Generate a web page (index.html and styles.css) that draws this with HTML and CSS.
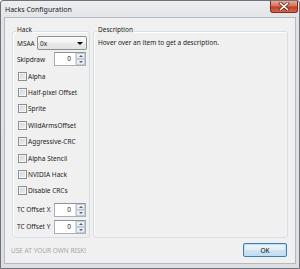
FILE: index.html
```html
<!DOCTYPE html>
<html lang="en">

<head>
  <meta charset="UTF-8" />
  <title>Hacks Configuration</title>
  <link rel="stylesheet" href="styles.css">
</head>

<body>
  <div class="window">
    <div class="titlebar">
      <span class="title">Hacks Configuration</span>
      <div class="close">
        <svg width="12" height="9" viewBox="0 0 12 9">
          <path d="M2.5 1.5 L9.5 7.5 M9.5 1.5 L2.5 7.5" stroke="#6b2a1e" stroke-width="3" stroke-linecap="square" />
          <path d="M2.5 1.5 L9.5 7.5 M9.5 1.5 L2.5 7.5" stroke="#fff" stroke-width="1.6" stroke-linecap="square" />
        </svg>
      </div>
    </div>

    <div class="client">
      <div class="groups">
        <div class="group hack">
          <span class="group-title">Hack</span>

          <div class="row">
            <span class="label">MSAA</span>
            <div class="select">0x<span class="arrow"></span></div>
          </div>
          <div class="row">
            <span class="label long">Skipdraw</span>
            <div class="spin">
              <span class="value">0</span>
              <span class="spin-btns"><span class="up"></span><span class="down"></span></span>
            </div>
          </div>

          <div class="checks">
            <div class="check"><span class="box"></span>Alpha</div>
            <div class="check"><span class="box"></span>Half-pixel Offset</div>
            <div class="check"><span class="box"></span>Sprite</div>
            <div class="check"><span class="box"></span>WildArmsOffset</div>
            <div class="check"><span class="box"></span>Aggressive-CRC</div>
            <div class="check"><span class="box"></span>Alpha Stencil</div>
            <div class="check"><span class="box"></span>NVIDIA Hack</div>
            <div class="check"><span class="box"></span>Disable CRCs</div>
          </div>

          <div class="row tc">
            <span class="label long">TC Offset X</span>
            <div class="spin">
              <span class="value">0</span>
              <span class="spin-btns"><span class="up"></span><span class="down"></span></span>
            </div>
          </div>
          <div class="row tc">
            <span class="label long">TC Offset Y</span>
            <div class="spin">
              <span class="value">0</span>
              <span class="spin-btns"><span class="up"></span><span class="down"></span></span>
            </div>
          </div>
        </div>

        <div class="group desc">
          <span class="group-title">Description</span>
          <p class="desc-text">Hover over an item to get a description.</p>
        </div>
      </div>

      <div class="footer">
        <span class="warn">USE AT YOUR OWN RISK!</span>
        <button class="ok">OK</button>
      </div>
    </div>
  </div>
</body>

</html>
```

FILE: styles.css
```css
body {
  margin: 0;
  font-family: 'Noto Sans', 'Open Sans', sans-serif;
  font-size: 6.5px;
  color: #1e1e1e;
  background: #fff;
}

.window {
  width: 300px;
  height: 269px;
  box-sizing: border-box;
  border: 1px solid #6e7379;
  border-radius: 3px 3px 0 0;
  background: linear-gradient(#eceef0, #e0e2e5 20px, #dcdee1);
  padding: 0 3px 3px 3px;
}

.titlebar {
  height: 16px;
  display: flex;
  align-items: center;
  justify-content: space-between;
}

.title {
  font-size: 7px;
  padding-left: 1px;
  color: #1a1a1a;
}

.close {
  width: 28px;
  height: 12px;
  margin-top: -4px;
  margin-right: -2px;
  box-sizing: border-box;
  border: 1px solid #7c2b1c;
  border-top: none;
  border-radius: 0 0 3px 3px;
  background: linear-gradient(#eaa898, #d8705a 45%, #c63e22 55%, #d4664e);
  display: flex;
  align-items: center;
  justify-content: center;
}

.client {
  height: 247px;
  box-sizing: border-box;
  border: 1px solid #b4bac2;
  background: #f0f0f0;
  padding: 13px 0 0 7px;
}

.groups {
  display: grid;
  grid-template-columns: 78px 195px;
  gap: 3px;
  height: 206px;
}

.group {
  position: relative;
  border: 1px solid #d5dfe5;
  border-radius: 3px;
  box-shadow: inset 1px 1px 0 #fff;
  padding: 4px 0 0 4px;
}

.group-title {
  position: absolute;
  top: -6px;
  left: 3px;
  padding: 0 1px;
  line-height: 8px;
  background: #f0f0f0;
}

.row {
  display: flex;
  align-items: center;
  height: 14px;
  margin-bottom: 2px;
}

.label {
  width: 20px;
}

.label.long {
  width: 37px;
}

.select {
  width: 50px;
  height: 14px;
  box-sizing: border-box;
  border: 1px solid #8e8f8f;
  border-radius: 2px;
  background: linear-gradient(#fafafa, #f2f2f2 50%, #e9e9e9 51%, #e2e2e2);
  display: flex;
  align-items: center;
  justify-content: space-between;
  padding: 0 3px 0 2px;
}

.arrow {
  width: 0;
  height: 0;
  border-left: 3px solid transparent;
  border-right: 3px solid transparent;
  border-top: 3px solid #000;
}

.spin {
  width: 32px;
  height: 14px;
  box-sizing: border-box;
  border: 1px solid #abadb3;
  border-top-color: #8d929b;
  background: #fff;
  display: flex;
}

.value {
  flex: 1;
  text-align: right;
  padding-right: 4px;
  line-height: 12px;
}

.spin-btns {
  width: 9px;
  display: flex;
  flex-direction: column;
  border-left: 1px solid #d6dbe2;
}

.spin-btns span {
  flex: 1;
  display: flex;
  align-items: center;
  justify-content: center;
  background: linear-gradient(#f4f6f9, #e4e9ef);
  border: 1px solid #c3cad4;
}

.spin-btns .up::before,
.spin-btns .down::before {
  content: "";
  border-left: 2px solid transparent;
  border-right: 2px solid transparent;
}

.spin-btns .up::before {
  border-bottom: 2px solid #4d6185;
}

.spin-btns .down::before {
  border-top: 2px solid #4d6185;
}

.checks {
  display: flex;
  flex-direction: column;
  margin-bottom: 3.8px;
}

.check {
  height: 16.4px;
  display: flex;
  align-items: center;
}

.box {
  width: 9px;
  height: 9px;
  box-sizing: border-box;
  margin-left: 1px;
  margin-right: 1px;
  border: 1px solid #8e8f8f;
  background: linear-gradient(135deg, #cfd3d9, #f2f2f2);
  box-shadow: inset 0 0 0 1px #f4f4f4;
}

.row.tc {
  margin-bottom: 3px;
}

.desc-text {
  margin: 0;
  line-height: 14px;
}

.footer {
  display: flex;
  align-items: center;
  justify-content: space-between;
  margin-top: 6px;
  padding: 0 8px 0 0;
  margin-left: -1px;
}

.warn {
  color: #a7a7a7;
}

.ok {
  width: 44px;
  height: 14px;
  padding: 0;
  font-family: inherit;
  font-size: 6.5px;
  color: #000;
  border: 1px solid #3c7fb1;
  border-radius: 2px;
  background: linear-gradient(#eef6fb, #e2eef6 50%, #cfe4f2 51%, #c3dcee);
  box-shadow: inset 0 0 0 1px #b8e2f8;
}
```
